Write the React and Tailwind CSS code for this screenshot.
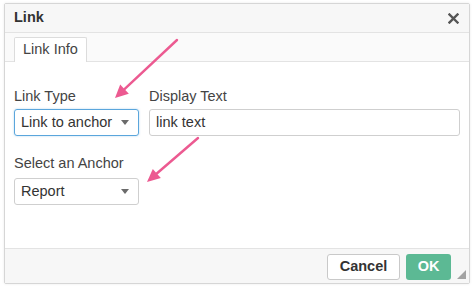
import React from "react";

function Caret() {
  return (
    <svg width="8" height="5" viewBox="0 0 8 5" className="shrink-0">
      <path d="M0 0 L8 0 L4 5 Z" fill="#6b6b6b" />
    </svg>
  );
}

export default function App() {
  return (
    <div
      className="relative w-[474px] h-[288px] bg-white overflow-hidden"
      style={{ fontFamily: '"Liberation Sans", Arial, sans-serif' }}
    >
      <div className="pt-[3px] pl-[4px]">
        <div className="relative w-[466px] h-[281px] border border-[#d6d6d6] rounded-[2px] bg-white flex flex-col shadow-[0_0_3px_rgba(0,0,0,0.08)]">
          {/* header */}
          <div className="h-[29px] shrink-0 flex items-center justify-between pl-[9px] pr-[10px] bg-[#f7f7f7] border-b border-[#e3e3e3]">
            <span className="text-[14.5px] font-bold text-[#333]">Link</span>
            <svg width="11" height="11" viewBox="0 0 11 11">
              <path d="M1.5 1.5 L9.5 9.5 M9.5 1.5 L1.5 9.5" stroke="#555" strokeWidth="2.4" strokeLinecap="square" />
            </svg>
          </div>
          {/* tabs */}
          <div className="h-[29px] shrink-0 flex items-end pl-[9px] bg-[#fafafa] border-b border-[#e3e3e3]">
            <div className="h-[25px] -mb-px px-[8px] flex items-center bg-white border border-b-0 border-[#dcdcdc] rounded-t-[2px] text-[14.5px] text-[#444]">
              Link Info
            </div>
          </div>
          {/* body */}
          <div className="flex-1 px-[9px] pt-[24px]">
            <div className="flex gap-[10px]">
              <div className="flex flex-col w-[125px]">
                <label className="text-[14.5px] leading-[20px] text-[#444]">Link Type</label>
                <div className="mt-[3px] h-[27px] rounded-[3px] border border-[#5ba6dc] shadow-[0_0_2px_rgba(91,166,220,0.5)] flex items-center justify-between pl-[6px] pr-[9px] text-[14.5px] text-[#333]">
                  <span>Link to anchor</span>
                  <Caret />
                </div>
              </div>
              <div className="flex flex-col flex-1">
                <label className="text-[14.5px] leading-[20px] text-[#444]">Display Text</label>
                <div className="mt-[3px] h-[27px] rounded-[3px] border border-[#cfcfcf] flex items-center pl-[6px] text-[14.5px] text-[#333]">
                  link text
                </div>
              </div>
            </div>
            <div className="flex flex-col w-[125px] mt-[17px]">
              <label className="text-[14.5px] leading-[20px] text-[#444]">Select an Anchor</label>
              <div className="mt-[5px] h-[27px] rounded-[3px] border border-[#cfcfcf] flex items-center justify-between pl-[6px] pr-[9px] text-[14.5px] text-[#333]">
                <span>Report</span>
                <Caret />
              </div>
            </div>
          </div>
          {/* footer */}
          <div className="h-[35px] shrink-0 bg-[#f7f7f7] border-t border-[#e3e3e3] flex items-start justify-end gap-[6px] pt-[5px] pr-[18px]">
            <div className="h-[26px] w-[73px] flex items-center justify-center rounded-[3px] border border-[#c9c9c9] bg-white text-[14.5px] font-bold text-[#333]">
              Cancel
            </div>
            <div className="h-[26px] w-[45px] flex items-center justify-center rounded-[3px] bg-[#5cb994] text-[14.5px] font-bold text-white">
              OK
            </div>
          </div>
          {/* resize handle */}
          <svg width="9" height="9" viewBox="0 0 9 9" className="absolute right-[3px] bottom-[4px]">
            <path d="M9 0 L9 9 L0 9 Z" fill="#a3a3a3" />
          </svg>
        </div>
      </div>
      {/* annotation arrows */}
      <svg className="absolute inset-0 pointer-events-none" width="474" height="288" viewBox="0 0 474 288">
        <line x1="177" y1="40" x2="124.5" y2="89.1" stroke="#ec5a91" strokeWidth="2.4" strokeLinecap="round" />
        <path d="M115 98 L128.8 93.7 L120.2 84.5 Z" fill="#ec5a91" />
        <line x1="198" y1="138" x2="156.8" y2="173.5" stroke="#ec5a91" strokeWidth="2.4" strokeLinecap="round" />
        <path d="M147 182 L160.8 178.1 L152.8 168.9 Z" fill="#ec5a91" />
      </svg>
    </div>
  );
}
